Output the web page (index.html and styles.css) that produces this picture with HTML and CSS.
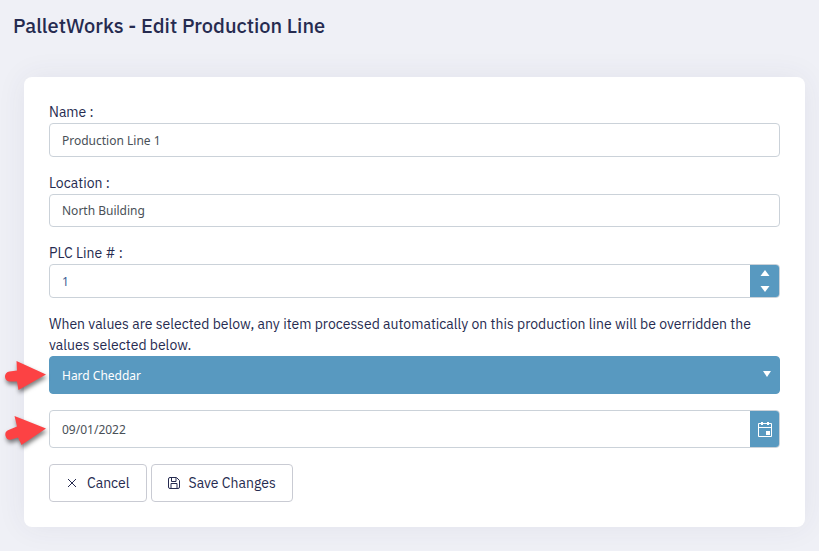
FILE: index.html
```html
<!DOCTYPE html>
<html lang="en">
<head>
<meta charset="utf-8">
<meta name="viewport" content="width=device-width, initial-scale=1">
<title>PalletWorks - Edit Production Line</title>
<link rel="stylesheet" href="styles.css">
</head>
<body>
<header class="page-header">
  <h1>PalletWorks - Edit Production Line</h1>
</header>
<main class="card">
  <form>
    <div class="field">
      <label for="name">Name :</label>
      <input class="control" id="name" type="text" value="Production Line 1">
    </div>
    <div class="field">
      <label for="location">Location :</label>
      <input class="control short" id="location" type="text" value="North Building">
    </div>
    <div class="field">
      <label for="plc">PLC Line # :</label>
      <div class="control group">
        <input id="plc" type="number" value="1">
        <div class="addon spinner">
          <button type="button" aria-label="Increase value"><svg width="10" height="6" viewBox="0 0 10 6"><path d="M5 0 9.500 6H.5z"/></svg></button>
          <button type="button" aria-label="Decrease value"><svg width="10" height="6" viewBox="0 0 10 6"><path d="M.5 0h9L5 6z"/></svg></button>
        </div>
      </div>
    </div>
    <div class="field">
      <label for="product">When values are selected below, any item processed automatically on this production line will be overridden the values selected below.</label>
      <div class="dropdown">
        <select id="product"><option>Hard Cheddar</option></select>
        <svg class="caret" width="8" height="6" viewBox="0 0 8 6"><path d="M0 0h8L4 6z"/></svg>
        <svg class="pointer" width="46" height="40" viewBox="0 0 46 40"><path d="M15.500 5 45 18.500 17.500 34 16 25.500H9.500a5 5 0 0 1-1-10L16 14.500z"/></svg>
      </div>
    </div>
    <div class="field dropdown">
      <div class="control group date">
        <input id="date" type="text" value="09/01/2022" aria-label="Date">
        <button class="addon" type="button" aria-label="Open calendar">
          <svg class="calendar" width="16" height="17" viewBox="0 0 16 17"><path d="M1.500 2.500h13v13h-13zM1 6.500h14"/><path class="solid" d="M4 1h2v3H4zM10 1h2v3h-2zM9 10h4v4H9z"/></svg>
        </button>
      </div>
      <svg class="pointer" width="46" height="40" viewBox="0 0 46 40"><path d="M13.500 6 45 18.500 20.500 35 17 27.500 10.500 29.500a5 5 0 0 1-3-9.500L16 16.500z"/></svg>
    </div>
    <div class="actions">
      <button class="btn" type="button"><svg width="12" height="12" viewBox="0 0 12 12"><path d="m2 2 8 8M10 2l-8 8"/></svg>Cancel</button>
      <button class="btn" type="submit"><svg width="12" height="12" viewBox="0 0 12 12"><path d="M2 .5h6.500l3 3V10a1.500 1.500 0 0 1-1.500 1.500H2A1.500 1.500 0 0 1 .5 10V2A1.500 1.500 0 0 1 2 .5zM3.500 1v3.500H8V1M3 11V6.500h6V11"/></svg>Save Changes</button>
    </div>
  </form>
</main>
</body>
</html>
```
FILE: styles.css
```css
*, *::before, *::after { box-sizing: border-box; }

body {
  margin: 0;
  min-height: 100vh;
  background: #eff0f6;
  color: #262b50;
  font: 14px/21px "IBM Plex Sans", Inter, sans-serif;
}

svg { display: block; fill: #fff; }

.page-header { padding: 14px 13px; }

h1 {
  margin: 0;
  font-size: 20px;
  font-weight: 500;
  line-height: 24px;
}

.card {
  margin: 25px 14px 24px 24px;
  padding: 25px;
  border-radius: 8px;
  background: #fff;
  box-shadow: 0 0 30px rgba(60, 60, 100, 0.07);
}

.field { margin-bottom: 16px; }

label { display: block; }

input, select, button {
  margin: 0;
  border: 0;
  color: inherit;
  font: inherit;
}

input, select {
  padding: 0 12px;
  font-family: "Noto Sans", sans-serif;
  font-size: 12px;
  color: #495057;
  outline: 0;
}

.control {
  display: block;
  width: 100%;
  height: 34px;
  border: 1px solid #cbd2d9;
  border-radius: 4px;
  background: #fff;
}

.group {
  display: flex;
  overflow: hidden;
}

.group input {
  flex: 1;
  min-width: 0;
  background: transparent;
}

.short { height: 33px; }
.date { height: 38px; }

input[type="number"] { appearance: textfield; color: #3a5d94; }
input[type="number"]::-webkit-inner-spin-button { appearance: none; }

.addon {
  display: flex;
  flex: 0 0 29px;
  align-items: center;
  justify-content: center;
  padding: 0;
  background: #5899c0;
}

.spinner { flex-direction: column; }

.spinner button {
  display: flex;
  flex: 1;
  align-items: center;
  justify-content: center;
  width: 100%;
  padding: 0;
  background: transparent;
}

.calendar { stroke: #fff; fill: none; }
.solid { fill: #fff; stroke: none; }

.dropdown { position: relative; }

.dropdown select {
  display: block;
  width: 100%;
  height: 38px;
  border: 1px solid #5899c0;
  border-radius: 4px;
  background: #5899c0;
  color: #fff;
  appearance: none;
}

.caret {
  position: absolute;
  top: 15px;
  right: 9px;
  pointer-events: none;
}

.pointer {
  position: absolute;
  top: 0;
  right: 100%;
  margin-right: 2px;
  fill: #fc4244;
  overflow: visible;
  filter: drop-shadow(1px 3px 2px rgba(0, 0, 0, 0.5));
  pointer-events: none;
}

.actions {
  display: flex;
  flex-wrap: wrap;
  gap: 4px;
}

.btn {
  display: flex;
  align-items: center;
  gap: 9px;
  height: 38px;
  padding: 0 16px;
  border: 1px solid #c9cbd3;
  border-radius: 4px;
  background: #fff;
}

.btn svg { fill: none; stroke: #262b50; }
```
